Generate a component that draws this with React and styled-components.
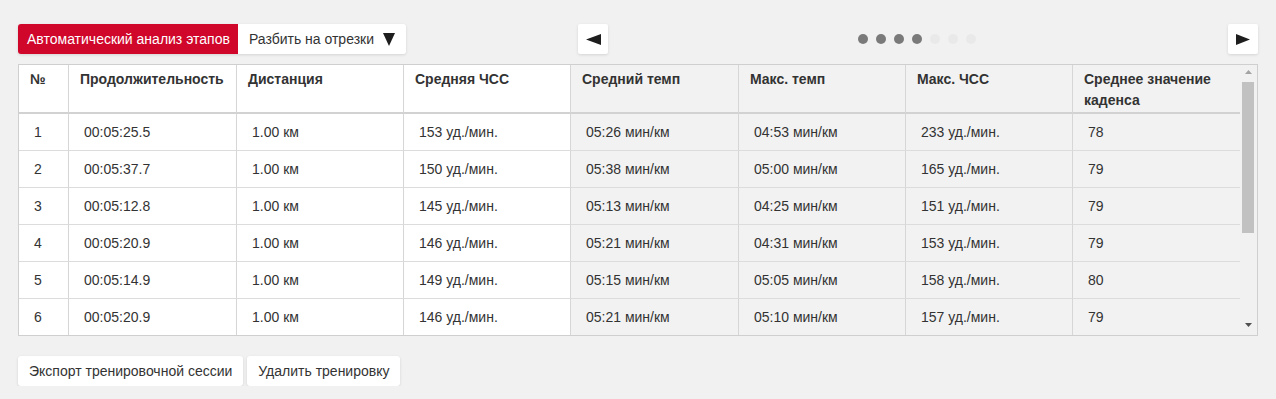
import React from "react";
import styled, { createGlobalStyle } from "styled-components";

const GlobalStyle = createGlobalStyle`
  html, body {
    margin: 0;
    padding: 0;
    background: #f1f1f1;
    font-family: "Liberation Sans", Arial, sans-serif;
    color: #333;
  }
`;

const Page = styled.div`
  padding: 24px 18px 0 18px;
  width: 1240px;
`;

const Toolbar = styled.div`
  display: flex;
  align-items: center;
  height: 30px;
  margin-bottom: 10px;
`;

const SegGroup = styled.div`
  display: flex;
  box-shadow: 0 1px 3px rgba(0, 0, 0, 0.12);
  border-radius: 3px;
`;

const SegButton = styled.button`
  height: 30px;
  border: none;
  margin: 0;
  padding: ${(p) => (p.$active ? "0 8px 0 9px" : "0 11px 0 11px")};
  font-family: inherit;
  font-size: 14px;
  display: flex;
  align-items: center;
  gap: 9px;
  background: ${(p) => (p.$active ? "#d0062a" : "#fff")};
  color: ${(p) => (p.$active ? "#fff" : "#333")};
  border-radius: ${(p) => (p.$active ? "3px 0 0 3px" : "0 3px 3px 0")};
  cursor: pointer;
`;

const ArrowButton = styled.button`
  width: 30px;
  height: 30px;
  padding: 0;
  border: none;
  background: #fff;
  border-radius: 2px;
  box-shadow: 0 1px 3px rgba(0, 0, 0, 0.12);
  display: flex;
  align-items: center;
  justify-content: center;
  margin-left: ${(p) => p.$ml || "0"};
  cursor: pointer;
`;

const Dots = styled.div`
  display: flex;
  gap: 8px;
  margin-left: 250px;
`;

const Dot = styled.span`
  width: 10px;
  height: 10px;
  border-radius: 50%;
  background: ${(p) => (p.$on ? "#7a7a7a" : "#e9e9e9")};
`;

const Frame = styled.div`
  border: 1px solid #cfcfcf;
  background: #fff;
  height: 270px;
  display: flex;
`;

const TableArea = styled.div`
  width: 1221px;
  overflow: hidden;
`;

const ScrollTrack = styled.div`
  width: 17px;
  background: #f1f1f1;
  display: flex;
  flex-direction: column;
`;

const ScrollArrow = styled.div`
  height: 17px;
  display: flex;
  justify-content: center;
  align-items: ${(p) => (p.$down ? "flex-start" : "flex-end")};
  padding: ${(p) => (p.$down ? "5px 0 0" : "0 0 8px")};
  box-sizing: border-box;
`;

const ScrollThumb = styled.div`
  width: 12px;
  height: 151px;
  margin: 0 3px 0 2px;
  background: #c1c1c1;
`;

const ScrollSpacer = styled.div`
  flex: 1;
`;

const Table = styled.table`
  width: 1221px;
  table-layout: fixed;
  border-collapse: separate;
  border-spacing: 0;
  font-size: 14px;
`;

const HeadCell = styled.th`
  text-align: left;
  vertical-align: top;
  font-weight: bold;
  font-size: 14px;
  line-height: 21px;
  height: 42px;
  padding: 4px 6px 1px 11px;
  color: #333;
  background: ${(p) => (p.$shaded ? "#f2f2f2" : "#fff")};
  border-right: ${(p) => (p.$last ? "none" : "1px solid #d6d6d6")};
  border-bottom: 2px solid #d2d2d2;
`;

const Cell = styled.td`
  height: 36px;
  padding: 0 8px 0 15px;
  line-height: 16px;
  color: #333;
  white-space: nowrap;
  background: ${(p) => (p.$shaded ? "#f2f2f2" : "#fff")};
  border-right: ${(p) => (p.$last ? "none" : "1px solid #d6d6d6")};
  border-bottom: 1px solid #dcdcdc;
`;

const Actions = styled.div`
  display: flex;
  gap: 4px;
  margin-top: 20px;
`;

const ActionButton = styled.button`
  height: 30px;
  padding: 0 11px;
  border: none;
  background: #fff;
  border-radius: 3px;
  box-shadow: 0 1px 3px rgba(0, 0, 0, 0.12);
  font-family: inherit;
  font-size: 14px;
  color: #333;
  cursor: pointer;
`;

const widths = [50, 168, 167, 167, 168, 167, 167, 167];
const headers = [
  "№",
  "Продолжительность",
  "Дистанция",
  "Средняя ЧСС",
  "Средний темп",
  "Макс. темп",
  "Макс. ЧСС",
  "Среднее значение каденса",
];

const rows = [
  ["1", "00:05:25.5", "1.00 км", "153 уд./мин.", "05:26 мин/км", "04:53 мин/км", "233 уд./мин.", "78"],
  ["2", "00:05:37.7", "1.00 км", "150 уд./мин.", "05:38 мин/км", "05:00 мин/км", "165 уд./мин.", "79"],
  ["3", "00:05:12.8", "1.00 км", "145 уд./мин.", "05:13 мин/км", "04:25 мин/км", "151 уд./мин.", "79"],
  ["4", "00:05:20.9", "1.00 км", "146 уд./мин.", "05:21 мин/км", "04:31 мин/км", "153 уд./мин.", "79"],
  ["5", "00:05:14.9", "1.00 км", "149 уд./мин.", "05:15 мин/км", "05:05 мин/км", "158 уд./мин.", "80"],
  ["6", "00:05:20.9", "1.00 км", "146 уд./мин.", "05:21 мин/км", "05:10 мин/км", "157 уд./мин.", "79"],
];

const Tri = ({ dir, w, h, color = "#1e1e1e" }) => {
  const pts =
    dir === "down"
      ? `0,0 ${w},0 ${w / 2},${h}`
      : dir === "up"
      ? `0,${h} ${w},${h} ${w / 2},0`
      : dir === "left"
      ? `${w},0 ${w},${h} 0,${h / 2}`
      : `0,0 0,${h} ${w},${h / 2}`;
  return (
    <svg width={w} height={h} viewBox={`0 0 ${w} ${h}`}>
      <polygon points={pts} fill={color} />
    </svg>
  );
};

export default function App() {
  return (
    <>
      <GlobalStyle />
      <Page>
        <Toolbar>
          <SegGroup>
            <SegButton $active>Автоматический анализ этапов</SegButton>
            <SegButton>
              Разбить на отрезки
              <Tri dir="down" w={12} h={13} />
            </SegButton>
          </SegGroup>
          <ArrowButton $ml="172px" aria-label="prev">
            <Tri dir="left" w={15} h={11} />
          </ArrowButton>
          <Dots>
            {[1, 1, 1, 1, 0, 0, 0].map((on, i) => (
              <Dot key={i} $on={!!on} />
            ))}
          </Dots>
          <ArrowButton $ml="auto" aria-label="next">
            <Tri dir="right" w={14} h={11} />
          </ArrowButton>
        </Toolbar>
        <Frame>
          <TableArea>
            <Table>
              <colgroup>
                {widths.map((w, i) => (
                  <col key={i} style={{ width: w }} />
                ))}
              </colgroup>
              <thead>
                <tr>
                  {headers.map((h, i) => (
                    <HeadCell key={i} $shaded={i >= 4} $last={i === 7}>
                      {h}
                    </HeadCell>
                  ))}
                </tr>
              </thead>
              <tbody>
                {rows.map((r, ri) => (
                  <tr key={ri}>
                    {r.map((c, ci) => (
                      <Cell key={ci} $shaded={ci >= 4} $last={ci === 7}>
                        {c}
                      </Cell>
                    ))}
                  </tr>
                ))}
              </tbody>
            </Table>
          </TableArea>
          <ScrollTrack>
            <ScrollArrow>
              <Tri dir="up" w={7} h={4} color="#a3a3a3" />
            </ScrollArrow>
            <ScrollThumb />
            <ScrollSpacer />
            <ScrollArrow $down>
              <Tri dir="down" w={7} h={4} color="#505050" />
            </ScrollArrow>
          </ScrollTrack>
        </Frame>
        <Actions>
          <ActionButton>Экспорт тренировочной сессии</ActionButton>
          <ActionButton>Удалить тренировку</ActionButton>
        </Actions>
      </Page>
    </>
  );
}
